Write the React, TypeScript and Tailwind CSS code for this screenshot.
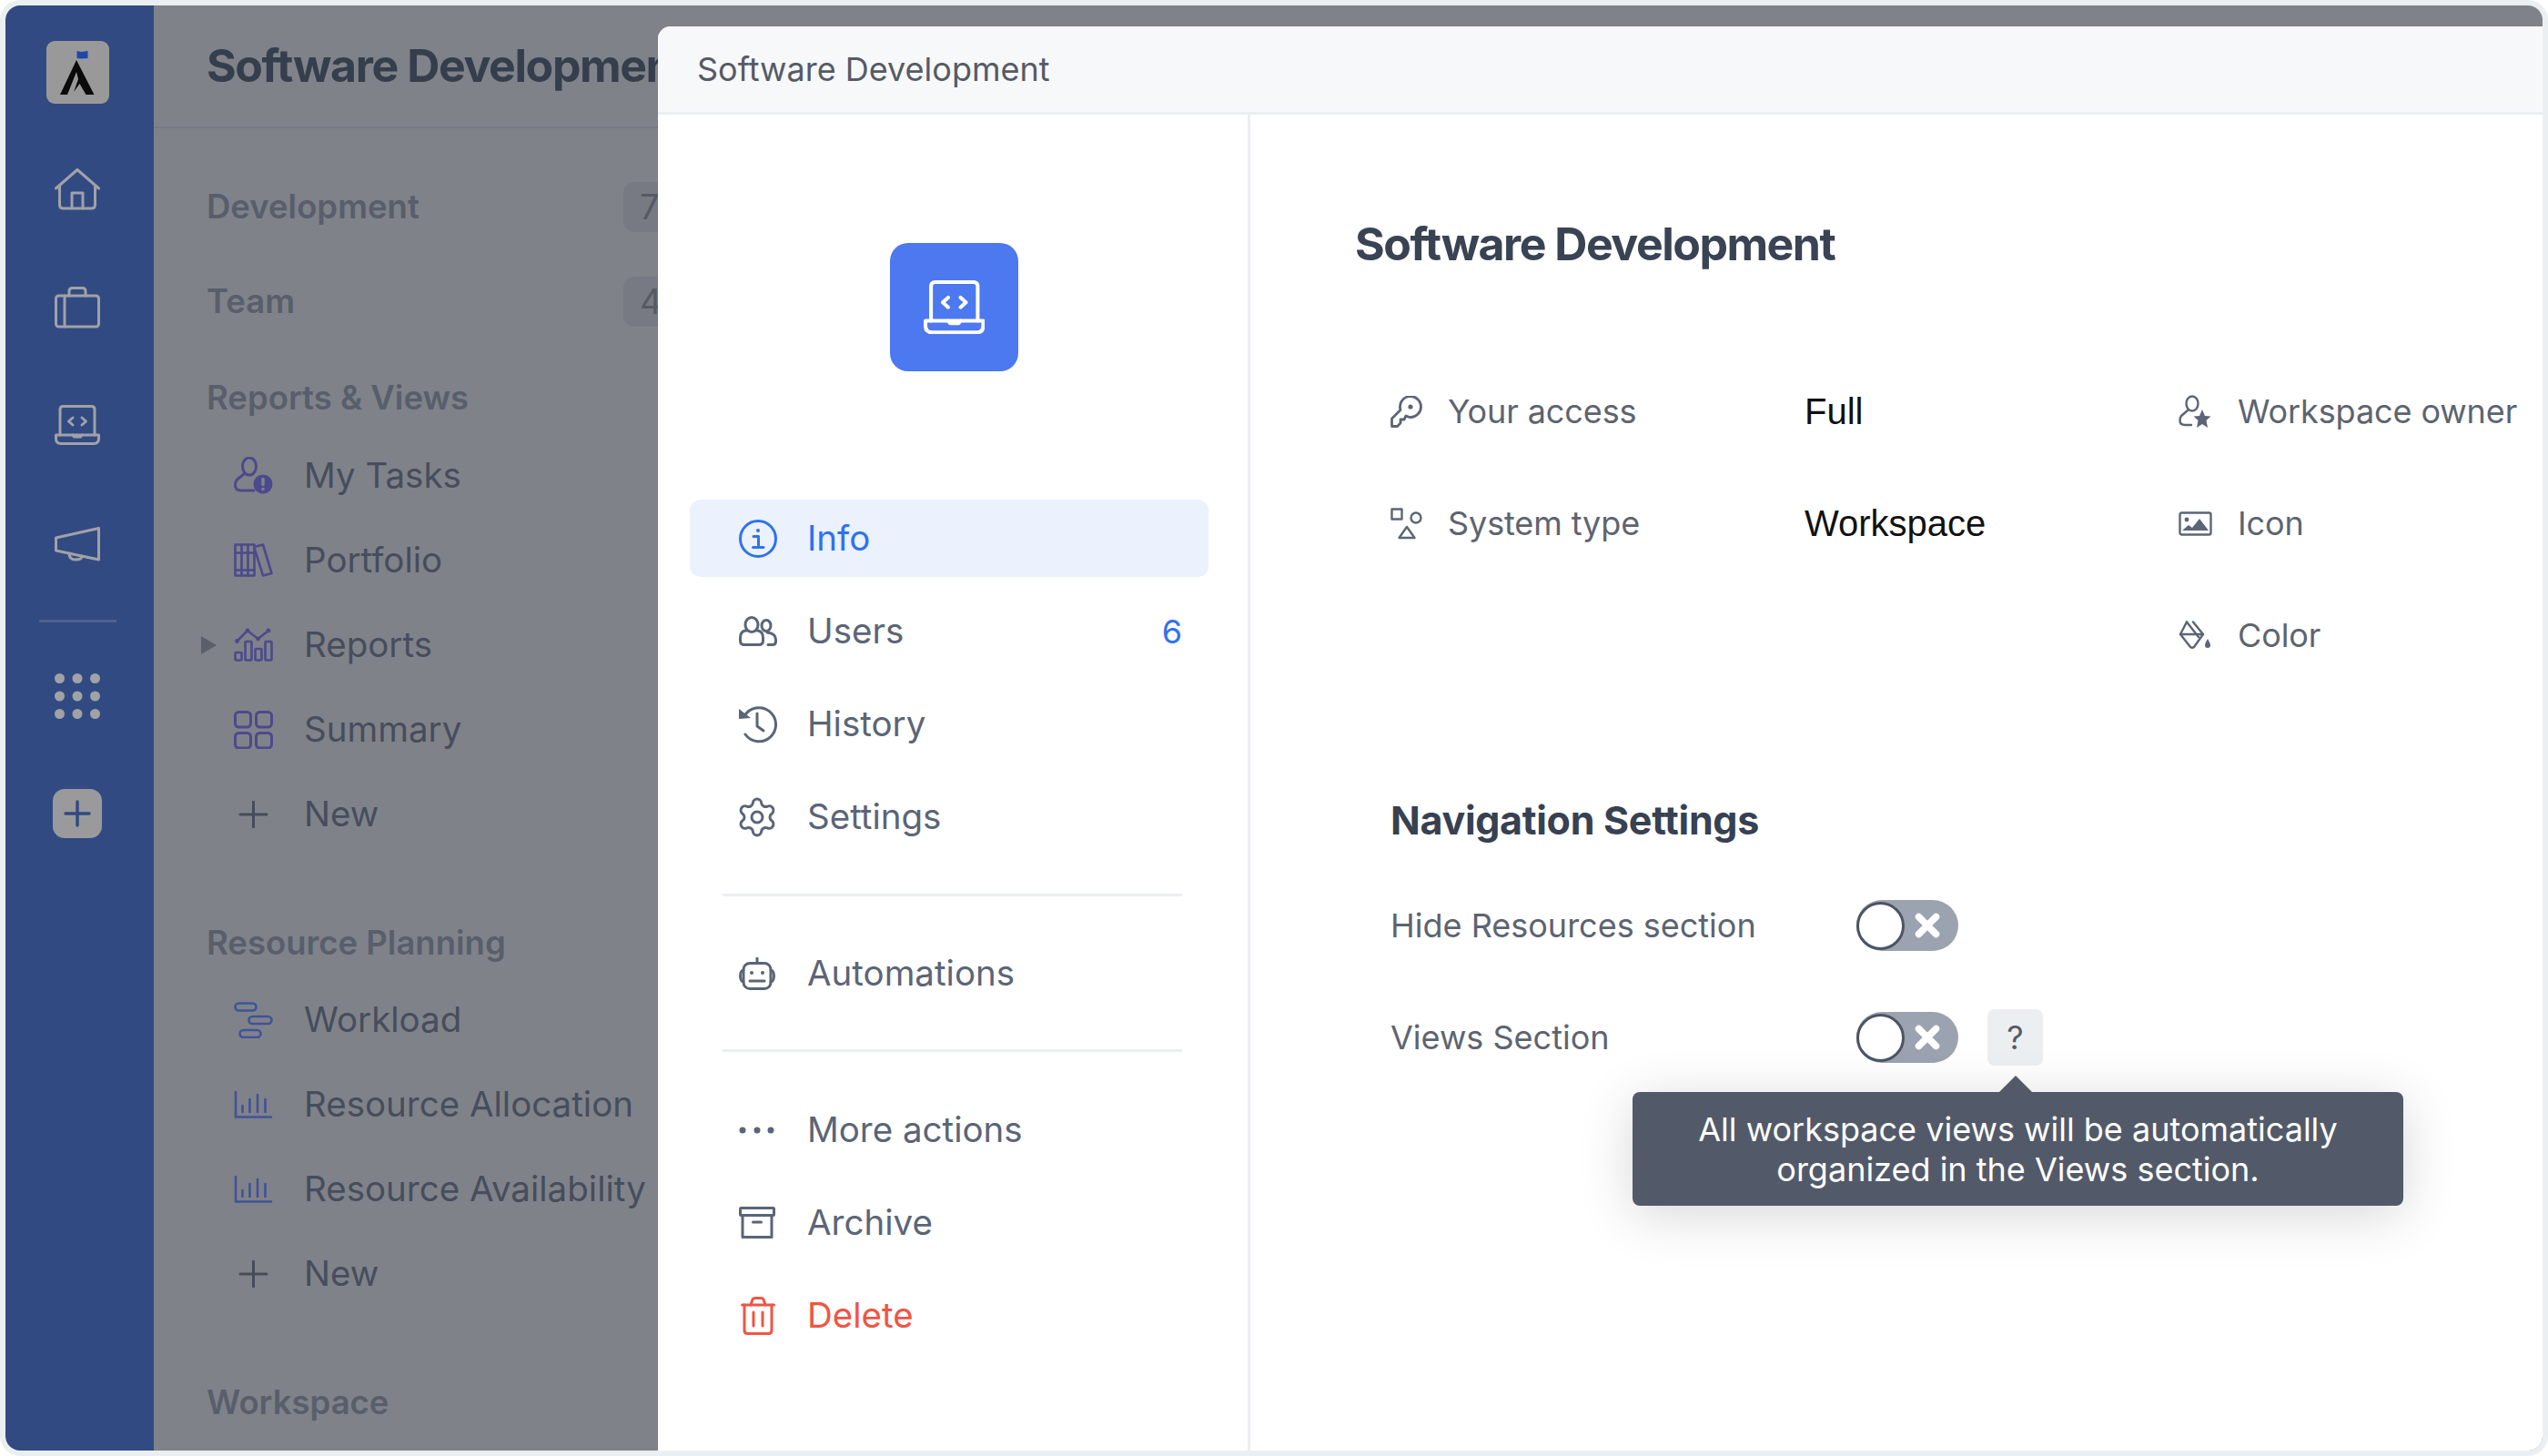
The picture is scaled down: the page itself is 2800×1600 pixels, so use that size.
import React from "react";
import { Settings as Gear } from "lucide-react";

const RAIL = "#a0a2a6";
const PUR = "#4c4a8c";
const BLU = "#3f5398";
const S = "#5b6577";

const Svg = ({ w, h, children, c = "none", s = "none", sw = 3 }: any) => (
  <svg width={w} height={h} viewBox={`0 0 ${w} ${h}`} fill={c} stroke={s} strokeWidth={sw} strokeLinecap="round" strokeLinejoin="round" className="shrink-0">
    {children}
  </svg>
);

const Logo = () => (
  <svg width="69" height="69" viewBox="0 0 69 69" className="block">
    <path d="M33.5 11 L38 12 L45.5 11 L45.5 19 L38 19.5 L33.5 19 Z" fill="#1e47a8" />
    <path d="M33 21 L52.5 59 L43.5 59 L36.5 47 L30 56 L35 42 L33 34 L23 59 L15 59 Z" fill="#0b0b0b" />
  </svg>
);

const Home = () => (
  <Svg w={50} h={46} s={RAIL}>
    <path d="M1.5 22 L25 1.5 L48.5 22" />
    <path d="M5.5 19 V40 Q5.5 44 9.5 44 H40.5 Q44.5 44 44.5 40 V19" />
    <path d="M19 44 V27 H31 V44" />
  </Svg>
);
const Briefcase = () => (
  <Svg w={50} h={46} s={RAIL}>
    <rect x="1.5" y="10" width="47" height="34" rx="3" />
    <path d="M16 10 V5 Q16 1.5 19.5 1.5 H30.5 Q34 1.5 34 5 V10" />
    <path d="M11 10 V44" />
  </Svg>
);
const Laptop = ({ color = RAIL, scale = 1 }: { color?: string; scale?: number }) => (
  <svg width={50 * scale} height={44 * scale} viewBox="0 0 50 44" fill="none" stroke={color} strokeWidth="3" strokeLinecap="round" strokeLinejoin="round" className="shrink-0">
    <path d="M6 33 V5 Q6 1.5 9.5 1.5 H40.5 Q44 1.5 44 5 V33" />
    <path d="M1.5 33 H48.5 V37 Q48.5 42.5 43 42.5 H7 Q1.5 42.5 1.5 37 Z" />
    <path d="M20 33 L21.5 35 H28.5 L30 33" />
    <path d="M20 14 L15.5 18 L20 22" />
    <path d="M30 14 L34.5 18 L30 22" />
  </svg>
);
const Mega = () => (
  <Svg w={50} h={38} s={RAIL}>
    <path d="M48.5 1.5 V36 L1.5 26 V12 Z" />
    <path d="M16 29 Q16 36 23 36 Q30 36 30 32" />
  </Svg>
);
const Dots = () => (
  <Svg w={50} h={50} c={RAIL}>
    {[5.5, 25, 44.5].map((y) => [5.5, 25, 44.5].map((x) => <circle key={`${x}-${y}`} cx={x} cy={y} r="5.5" />))}
  </Svg>
);

const MyTasks = () => (
  <Svg w={43} h={41} s={PUR}>
    <ellipse cx="17" cy="10.5" rx="7.5" ry="9.5" />
    <path d="M11 19 L3.5 25 Q1.5 27 1.5 31 Q1.5 37 8 37 H22" />
    <circle cx="32" cy="30" r="10.5" fill={PUR} stroke="none" />
    <path d="M32 24.5 V30.5" stroke="#808289" strokeWidth="3.5" />
    <circle cx="32" cy="35.5" r="1.8" fill="#808289" stroke="none" />
  </Svg>
);
const Books = () => (
  <Svg w={43} h={37} s={PUR} sw={2.6}>
    <rect x="1.5" y="1.5" width="21" height="34" />
    <path d="M8.5 1.5 V35.5 M15.5 1.5 V35.5 M1.5 10.5 H22.5 M1.5 29.5 H22.5" />
    <path d="M22.5 4 L32 1.5 L41.5 33 L32 35.5 L22.5 5" />
  </Svg>
);
const Chart = () => (
  <Svg w={43} h={37} s={PUR} sw={2.6}>
    <path d="M3.5 14.5 L15 3 L26.5 12 L38 3" />
    <g fill={PUR} stroke="none">
      <circle cx="3.5" cy="14.5" r="2.4" />
      <circle cx="15" cy="3" r="2.4" />
      <circle cx="26.5" cy="12" r="2.4" />
      <circle cx="38" cy="3" r="2.4" />
    </g>
    <rect x="1.5" y="27" width="7" height="8.5" rx="1" />
    <rect x="12.5" y="15" width="7" height="20.5" rx="1" />
    <rect x="23.5" y="23" width="7" height="12.5" rx="1" />
    <rect x="34.5" y="15" width="7" height="20.5" rx="1" />
  </Svg>
);
const Grid4 = () => (
  <Svg w={43} h={42} s={PUR}>
    <rect x="1.5" y="1.5" width="17" height="16.5" rx="4" />
    <rect x="24.5" y="1.5" width="17" height="16.5" rx="4" />
    <rect x="1.5" y="24.5" width="17" height="16.5" rx="4" />
    <rect x="24.5" y="24.5" width="17" height="16.5" rx="4" />
  </Svg>
);
const Plus = () => (
  <Svg w={43} h={30} s="#454c5a">
    <path d="M21.5 1 V29 M7 15 H36" />
  </Svg>
);
const Workload = () => (
  <Svg w={43} h={40} s={BLU} sw={2.6}>
    <rect x="1.5" y="1.5" width="23" height="8" rx="4" />
    <rect x="16.5" y="16" width="25" height="8" rx="4" />
    <rect x="6.5" y="31" width="23" height="8" rx="4" />
  </Svg>
);
const Bars = () => (
  <Svg w={43} h={30} s={BLU} sw={2.6}>
    <path d="M2 1 V28.5 H41" />
    <path d="M9.5 16 V23 M17.5 9 V23 M26 4 V23 M34.5 9 V23" />
  </Svg>
);

const Info = () => (
  <Svg w={42} h={42} s="#2f72ee">
    <circle cx="21" cy="21" r="19.5" />
    <path d="M16 18.5 H21.5 V30 M15.5 30.5 H27" />
    <circle cx="21" cy="12" r="2" fill="#2f72ee" stroke="none" />
  </Svg>
);
const Users = () => (
  <Svg w={42} h={33} s={S}>
    <ellipse cx="14" cy="9.5" rx="7" ry="8" />
    <path d="M8 16 H7 Q1.5 17 1.5 24 V27 Q1.5 31.5 6 31.5 H22 Q26.5 31.5 26.5 27 V24 Q26.5 17 21 16 H20" />
    <ellipse cx="30" cy="10.5" rx="5" ry="6" />
    <path d="M31 18 Q40.5 19 40.5 26 V28 Q40.5 31.5 37 31.5 H32" />
  </Svg>
);
const History = () => (
  <Svg w={42} h={42} s={S}>
    <path d="M6 12 A18.5 18.5 0 1 1 7 32" />
    <path d="M20 9 V23 L27 28" />
    <path d="M0 4 L13 14 L0 15 Z" fill={S} stroke="none" />
  </Svg>
);
const Bot = () => (
  <Svg w={40} h={36} s={S}>
    <rect x="5" y="6.5" width="30" height="28" rx="7" />
    <path d="M20 1 V6" />
    <path d="M5 14 Q1.5 15 1.5 20.5 Q1.5 26 5 27 M35 14 Q38.5 15 38.5 20.5 Q38.5 26 35 27" />
    <path d="M12 26 H28" />
    <circle cx="14" cy="17" r="2" fill={S} stroke="none" />
    <circle cx="26" cy="17" r="2" fill={S} stroke="none" />
  </Svg>
);
const More = () => (
  <Svg w={40} h={8} c={S}>
    <circle cx="4" cy="4" r="3.5" />
    <circle cx="20" cy="4" r="3.5" />
    <circle cx="35" cy="4" r="3.5" />
  </Svg>
);
const Archive = () => (
  <Svg w={40} h={35} s={S}>
    <rect x="1.5" y="1.5" width="37" height="8" rx="1" />
    <path d="M4 9.5 V33.5 H36 V9.5" />
    <path d="M15.5 17 H24.5" />
  </Svg>
);
const Trash = () => (
  <Svg w={38} h={42} s="#f05545">
    <path d="M1.5 9 H36.5" />
    <path d="M11 9 L13 3 Q13.5 1.5 15.5 1.5 H22.5 Q24.5 1.5 25 3 L27 9" />
    <path d="M4 9 V37 Q4 40.5 7.5 40.5 H30.5 Q34 40.5 34 37 V9" />
    <path d="M14 17 V32 M24 17 V32" />
  </Svg>
);

const Key = () => (
  <Svg w={35} h={35} s={S} sw={2.8}>
    <path d="M1.5 33.5 V25 L11 15.5 A11.5 11.5 0 1 1 21 23.5 L17 22 L15 26 L11 26 V30 L7.5 33.5 Z" />
    <circle cx="22" cy="12" r="2.6" fill={S} stroke="none" />
  </Svg>
);
const Shapes = () => (
  <Svg w={35} h={35} s={S} sw={2.4}>
    <rect x="1.5" y="1.5" width="11" height="11" />
    <circle cx="28" cy="11" r="5.5" />
    <path d="M18 21 L9.5 33 H26.5 Z" />
  </Svg>
);
const Owner = () => (
  <Svg w={36} h={37} s={S} sw={2.4}>
    <ellipse cx="15" cy="9.5" rx="6.5" ry="8" />
    <path d="M10 17 L3 23 Q1.5 25 1.5 28 Q1.5 33 7 33 H14" />
    <path d="M26 16 L29 23 L35.5 23.5 L30.5 28 L32 36 L26 32 L20 36 L21.5 28 L16.5 23.5 L23 23 Z" fill={S} stroke="none" />
  </Svg>
);
const Pic = () => (
  <Svg w={37} h={27} s={S} sw={2.4}>
    <rect x="1.5" y="1.5" width="34" height="24" rx="2" />
    <circle cx="9" cy="9" r="2.4" fill={S} stroke="none" />
    <path d="M4 21 L11 15 L15 18 L23 8 L33 21 Z" fill={S} stroke="none" />
  </Svg>
);
const Bucket = () => (
  <Svg w={36} h={32} s={S} sw={2.4}>
    <path d="M9 1.5 L2 15 L13 29 Q15 30.5 17 29 L27 15 L16 1.5" />
    <path d="M2 15 H27" />
    <path d="M9 1.5 L22 18" />
    <path d="M32 20 Q35 25 35 27 A3 3 0 0 1 29 27 Q29 25 32 20 Z" fill={S} stroke="none" />
  </Svg>
);

const SectionHead = ({ children, cls }: any) => (
  <div className={`h-[48px] flex items-center text-[36.5px] font-semibold text-[#585e6b] ${cls}`}>{children}</div>
);
const Row = ({ icon, label, caret }: any) => (
  <div className="relative h-[93px] flex items-center ml-[30px]">
    {caret && <div className="absolute left-[-36px] top-[37px] w-0 h-0 border-y-[10px] border-y-transparent border-l-[17px] border-l-[#5a5f6b]" />}
    <div className="w-[77px] flex">{icon}</div>
    <span className="text-[38.5px] text-[#464d5c] whitespace-nowrap">{label}</span>
  </div>
);

const NavRow = ({ icon, label, active, red, badge }: any) => (
  <div className={`h-[85px] flex items-center pl-[54px] pr-[29px] rounded-[12px] ${active ? "bg-[#ebf1fd]" : ""}`}>
    <div className="w-[75px] flex">{icon}</div>
    <span className={`text-[38.5px] flex-1 ${active ? "text-[#2f72ee]" : red ? "text-[#f05545]" : "text-[#5b6577]"}`}>{label}</span>
    {badge && <span className="text-[36px] text-[#2f72ee]">{badge}</span>}
  </div>
);

const Toggle = () => (
  <div className="w-[112px] h-[56px] rounded-full bg-[#9ca3b0] flex items-center shrink-0">
    <div className="w-[53px] h-[53px] rounded-full bg-white border-[3px] border-[#4b5563]" />
    <svg width="30" height="30" viewBox="0 0 30 30" className="ml-[10px]" stroke="#fff" strokeWidth="7.5" strokeLinecap="round">
      <path d="M5.5 5.5 L24.5 24.5 M24.5 5.5 L5.5 24.5" />
    </svg>
  </div>
);

const Label = ({ children }: any) => <span className="text-[36px] tracking-[-0.1px] text-[#5d6470] whitespace-nowrap">{children}</span>;
const Value = ({ children }: any) => <span className="text-[40px] text-[#111111] whitespace-nowrap font-['Liberation_Sans',sans-serif]">{children}</span>;
const IC = ({ children }: any) => <div className="flex items-center">{children}</div>;

export default function App() {
  return (
    <div className="w-[2800px] h-[1600px] bg-white font-['Inter',sans-serif]">
      <div className="relative w-full h-full rounded-[22px] border-[6px] border-[#ebeff2] overflow-hidden flex">
        <aside className="w-[163px] shrink-0 bg-[#324a82] flex flex-col items-center pt-[39px] pr-[5px]">
          <div className="w-[69px] h-[69px] rounded-[9px] bg-[#999999] overflow-hidden">
            <Logo />
          </div>
          <div className="mt-[71px]"><Home /></div>
          <div className="mt-[84px]"><Briefcase /></div>
          <div className="mt-[84px]"><Laptop /></div>
          <div className="mt-[90px]"><Mega /></div>
          <div className="mt-[64px] w-[85px] h-[3px] bg-[#4e618f]" />
          <div className="mt-[56px]"><Dots /></div>
          <div className="mt-[77px] w-[54px] h-[54px] rounded-[13px] bg-[#9a9a9c] flex items-center justify-center">
            <svg width="30" height="30" viewBox="0 0 30 30" stroke="#324a82" strokeWidth="3.5" strokeLinecap="round">
              <path d="M15 2 V28 M2 15 H28" />
            </svg>
          </div>
        </aside>

        <main className="flex-1 bg-[#808289] min-w-0">
          <div className="h-[135px] border-b-[2px] border-[#777a82] pl-[58px] flex items-center">
            <h1 className="text-[50px] font-bold tracking-[-1.4px] text-[#353e4c] whitespace-nowrap">Software Development</h1>
          </div>
          <div className="pl-[58px]">
            <div className="pt-[34px]">
              {[["Development", "7"], ["Team", "4"]].map(([a, b]) => (
                <div key={a} className="h-[104px] flex items-center">
                  <span className="text-[36.5px] font-semibold text-[#585e6b] w-[458px]">{a}</span>
                  <span className="w-[80px] h-[55px] rounded-[12px] bg-[#777a83] text-[38px] text-[#555a65] flex items-center pl-[18px]">{b}</span>
                </div>
              ))}
            </div>
            <SectionHead cls="mt-[30px] mb-[15px]">Reports &amp; Views</SectionHead>
            <Row icon={<MyTasks />} label="My Tasks" />
            <Row icon={<Books />} label="Portfolio" />
            <Row icon={<Chart />} label="Reports" caret />
            <Row icon={<Grid4 />} label="Summary" />
            <Row icon={<Plus />} label="New" />
            <SectionHead cls="mt-[71px] mb-[14px]">Resource Planning</SectionHead>
            <Row icon={<Workload />} label="Workload" />
            <Row icon={<Bars />} label="Resource Allocation" />
            <Row icon={<Bars />} label="Resource Availability" />
            <Row icon={<Plus />} label="New" />
            <SectionHead cls="mt-[71px]">Workspace</SectionHead>
          </div>
        </main>

        <section className="absolute left-[717px] top-[23px] right-0 bottom-0 bg-white rounded-tl-[14px] overflow-hidden flex flex-col shadow-[0_0_1px_rgba(0,0,0,0.2)]">
          <header className="h-[97px] shrink-0 bg-[#f7f8fa] border-b-[3px] border-[#eceef2] pl-[43px] flex items-center text-[36px] text-[#555b65]">
            Software Development
          </header>
          <div className="flex flex-1 min-h-0">
            <nav className="w-[651px] shrink-0 border-r-[3px] border-[#eceef2] pt-[141px]">
              <div className="ml-[255px] w-[141px] h-[141px] rounded-[20px] bg-[#4c78f0] flex items-center justify-center">
                <Laptop color="#ffffff" scale={1.35} />
              </div>
              <div className="mt-[141px] ml-[35px] w-[570px] flex flex-col gap-[17px]">
                <NavRow icon={<Info />} label="Info" active />
                <NavRow icon={<Users />} label="Users" badge="6" />
                <NavRow icon={<History />} label="History" />
                <NavRow icon={<Gear size={48} strokeWidth={1.5} color={S} className="ml-[-4px] mr-[-4px]" />} label="Settings" />
              </div>
              <div className="mt-[42px] ml-[71px] w-[505px] h-[3px] bg-[#eceef2]" />
              <div className="mt-[42px] ml-[35px] w-[570px]">
                <NavRow icon={<Bot />} label="Automations" />
              </div>
              <div className="mt-[41px] ml-[71px] w-[505px] h-[3px] bg-[#eceef2]" />
              <div className="mt-[43px] ml-[35px] w-[570px] flex flex-col gap-[17px]">
                <NavRow icon={<More />} label="More actions" />
                <NavRow icon={<Archive />} label="Archive" />
                <NavRow icon={<div className="ml-[2px]"><Trash /></div>} label="Delete" red />
              </div>
            </nav>

            <div className="flex-1 pl-[114px] pt-[112px]">
              <h2 className="ml-[1px] h-[60px] flex items-center text-[50px] font-bold tracking-[-1.5px] text-[#3a4354] whitespace-nowrap">Software Development</h2>
              <div className="mt-[124px] ml-[40px] grid grid-cols-[63px_392px_411px_65px_auto] auto-rows-[60px] gap-y-[63px] items-center">
                <IC><Key /></IC><Label>Your access</Label><Value>Full</Value><IC><Owner /></IC><Label>Workspace owner</Label>
                <IC><Shapes /></IC><Label>System type</Label><Value>Workspace</Value><IC><Pic /></IC><Label>Icon</Label>
                <div /><div /><div /><IC><Bucket /></IC><Label>Color</Label>
              </div>
              <div className="ml-[40px]">
                <h3 className="mt-[143px] h-[60px] flex items-center text-[43px] font-bold tracking-[-0.3px] text-[#374151] whitespace-nowrap">Navigation Settings</h3>
                <div className="mt-[58px] flex items-center">
                  <span className="w-[512px] text-[36px] text-[#5d6470]">Hide Resources section</span>
                  <Toggle />
                </div>
                <div className="relative mt-[64px] flex items-center">
                  <span className="w-[512px] text-[36px] text-[#5d6470]">Views Section</span>
                  <Toggle />
                  <div className="ml-[32px] w-[61px] h-[62px] rounded-[8px] bg-[#eceff2] flex items-center justify-center text-[36px] text-[#555b65]">?</div>
                  <div className="absolute left-[266px] top-[91px] w-[847px] h-[125px] rounded-[8px] bg-[#525a69] shadow-[0_10px_60px_rgba(0,0,0,0.16)] flex items-center justify-center text-center text-[36px] leading-[44px] text-white">
                    <svg width="38" height="19" viewBox="0 0 38 19" className="absolute left-[402px] top-[-18px]">
                      <path d="M19 0 L38 19 H0 Z" fill="#525a69" />
                    </svg>
                    <span>
                      All workspace views will be automatically
                      <br />
                      organized in the Views section.
                    </span>
                  </div>
                </div>
              </div>
            </div>
          </div>
        </section>
      </div>
    </div>
  );
}
